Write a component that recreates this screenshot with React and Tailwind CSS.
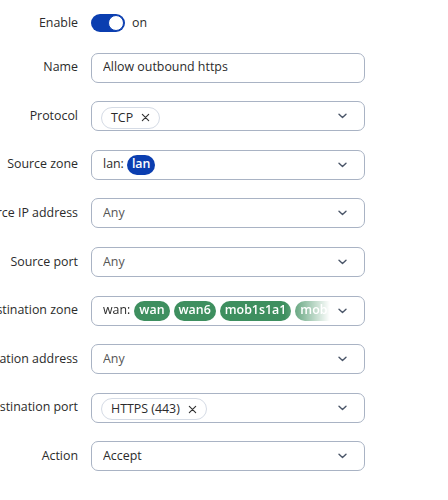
import React from "react";

const Chevron = () => (
  <svg width="9" height="6" viewBox="0 0 9 6" className="shrink-0">
    <path d="M1 1.2l3.5 3.3 3.5-3.3" fill="none" stroke="#4a5568" strokeWidth="1.4" strokeLinecap="round" strokeLinejoin="round" />
  </svg>
);

const X = () => (
  <svg width="9" height="9" viewBox="0 0 10 10" className="shrink-0">
    <path d="M1.5 1.5l7 7M8.5 1.5l-7 7" fill="none" stroke="#333" strokeWidth="1.3" strokeLinecap="round" />
  </svg>
);

const Row = ({ label, children }) => (
  <div className="flex items-center h-[30px]">
    <div className="w-[78px] shrink-0 whitespace-nowrap flex justify-end text-[12.4px] text-[#2b2b2b]">
      <span>{label}</span>
    </div>
    <div className="ml-[13px] w-[274px] h-full">{children}</div>
  </div>
);

const Box = ({ children, select = true }) => (
  <div className="h-full w-full border border-[#a9b3c4] rounded-[7px] flex items-center pl-[11px] pr-[17px] bg-white">
    <div className="flex-1 min-w-0 flex items-center overflow-hidden">{children}</div>
    {select && <Chevron />}
  </div>
);

const TagChip = ({ text }) => (
  <span className="flex items-center gap-[8px] h-[22px] px-[9px] border border-[#d5dbe5] rounded-full text-[12.4px] text-[#2b2b2b] whitespace-nowrap">
    {text} <X />
  </span>
);

const Zone = ({ text, color }) => (
  <span className={`flex items-center h-[20px] px-[5px] rounded-full text-white font-semibold text-[12.4px] whitespace-nowrap ${color}`}>
    {text}
  </span>
);

export default function App() {
  return (
    <div className="w-[448px] h-[500px] bg-white overflow-hidden" style={{ fontFamily: '"Open Sans", "Noto Sans", sans-serif' }}>
      <div className="flex flex-col gap-[18.6px] pt-[8px]">
        <div className="flex items-center h-[30px] mb-[-4px]">
          <div className="w-[78px] text-right text-[12.4px] text-[#2b2b2b]">Enable</div>
          <div className="ml-[13px] flex items-center gap-[7px]">
            <div className="w-[34px] h-[18px] rounded-full bg-[#0b3eb0] flex items-center justify-end pr-[1px]">
              <div className="w-[16px] h-[16px] rounded-full bg-white border-[1.5px] border-[#0b3eb0]" />
            </div>
            <span className="text-[12.4px] text-[#2b2b2b]">on</span>
          </div>
        </div>
        <Row label="Name">
          <Box select={false}><span className="text-[12.4px] text-[#2b2b2b]">Allow outbound https</span></Box>
        </Row>
        <Row label="Protocol">
          <div className="h-full w-full border border-[#a9b3c4] rounded-[7px] flex items-center pl-[9px] pr-[17px]">
            <div className="flex-1"><span className="inline-flex"><TagChip text="TCP" /></span></div>
            <Chevron />
          </div>
        </Row>
        <Row label="Source zone">
          <Box>
            <span className="text-[12.4px] text-[#2b2b2b] mr-[3px]">lan:</span>
            <Zone text="lan" color="bg-[#0b3eb0]" />
          </Box>
        </Row>
        <Row label="Source IP address">
          <Box><span className="text-[12.4px] text-[#555]">Any</span></Box>
        </Row>
        <Row label="Source port">
          <Box><span className="text-[12.4px] text-[#555]">Any</span></Box>
        </Row>
        <Row label="Destination zone">
          <div className="h-full w-full border border-[#a9b3c4] rounded-[7px] flex items-center pl-[11px] pr-[17px]">
            <div className="flex-1 min-w-0 flex items-center gap-[4px] overflow-hidden [mask-image:linear-gradient(to_right,black_80%,transparent_100%)]">
              <span className="text-[12.4px] text-[#2b2b2b]">wan:</span>
              <Zone text="wan" color="bg-[#3e8f5f]" />
              <Zone text="wan6" color="bg-[#3e8f5f]" />
              <Zone text="mob1s1a1" color="bg-[#3e8f5f]" />
              <Zone text="mob1s2a1" color="bg-[#3e8f5f]" />
            </div>
            <span className="ml-[8px]"><Chevron /></span>
          </div>
        </Row>
        <Row label="Destination address">
          <Box><span className="text-[12.4px] text-[#555]">Any</span></Box>
        </Row>
        <Row label="Destination port">
          <div className="h-full w-full border border-[#a9b3c4] rounded-[7px] flex items-center pl-[9px] pr-[17px]">
            <div className="flex-1"><span className="inline-flex"><TagChip text="HTTPS (443)" /></span></div>
            <Chevron />
          </div>
        </Row>
        <Row label="Action">
          <Box><span className="text-[12.4px] text-[#2b2b2b]">Accept</span></Box>
        </Row>
      </div>
    </div>
  );
}
